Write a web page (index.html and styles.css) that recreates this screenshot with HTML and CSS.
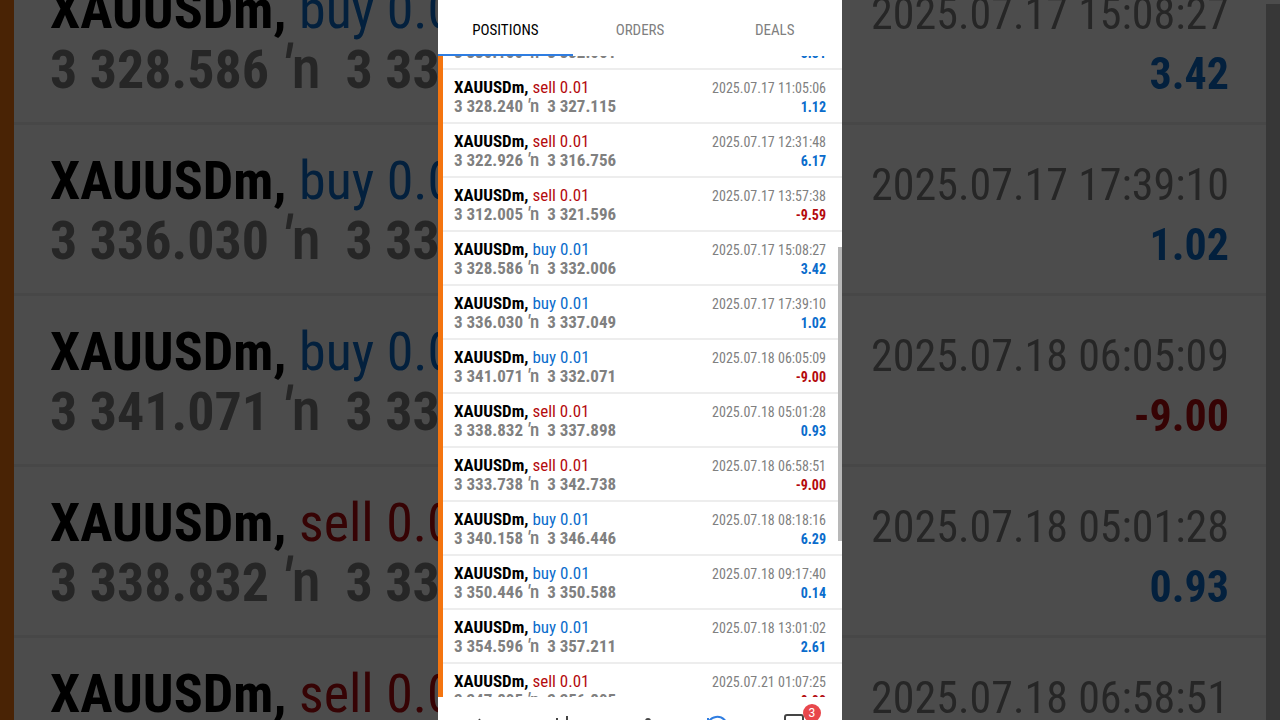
FILE: index.html
```html
<!DOCTYPE html>
<html lang="en">
<head>
  <meta charset="UTF-8" />
  <meta name="viewport" content="width=device-width, initial-scale=1.0" />
  <title>History - Positions</title>
  <link rel="stylesheet" href="styles.css">
</head>
<body>
  <div class="stage">
    <!-- Enlarged, dimmed copy behind the phone -->
    <div class="backdrop" aria-hidden="true">
      <ul class="positions positions-large" id="backdropList"></ul>
      <span class="backdrop-scrollbar"></span>
    </div>

    <main class="phone">
      <div class="tabs" role="tablist">
        <button class="tab active" role="tab" aria-selected="true">POSITIONS</button>
        <button class="tab" role="tab" aria-selected="false">ORDERS</button>
        <button class="tab" role="tab" aria-selected="false">DEALS</button>
      </div>

      <div class="history">
        <ul class="positions" id="positionList"></ul>
        <span class="scrollbar"></span>
      </div>

      <nav class="bottom-nav">
        <a href="#quotes" aria-label="Quotes">
          <svg width="28" height="28" viewBox="0 0 28 28"><path d="M2 18l9.500-9 6 7M22 17l-9.500 9-6-7" /></svg>
        </a>
        <a href="#chart" aria-label="Chart">
          <svg width="28" height="28" viewBox="0 0 28 28"><path d="M10 7v19M6 12h8v9H6zM20 5v17M17 10h6v8h-6z" /></svg>
        </a>
        <a href="#trade" aria-label="Trade">
          <svg width="28" height="28" viewBox="0 0 28 28"><path d="M1 23l6-7 6 5 9-11" /><circle class="dot" cx="22" cy="10" r="3" /></svg>
        </a>
        <a href="#history" class="current" aria-label="History">
          <svg width="28" height="28" viewBox="0 0 28 28"><path d="M3.500 11a10 10 0 1 1-1 7M3 7v4h6M12 10v6l4 3" /></svg>
        </a>
        <a href="#messages" aria-label="Messages">
          <svg width="28" height="28" viewBox="0 0 28 28"><path d="M3 4h14q2 0 2 2v13q0 2-2 2H7l-6 5V6q0-2 2-2z" /></svg>
          <span class="badge">3</span>
        </a>
      </nav>
    </main>
  </div>

  <script>
    const positions = [
      { type: "buy", open: "3 330.150", close: "3 332.061", time: "2025.07.17 09:42:11", profit: "3.31" },
      { type: "sell", open: "3 328.240", close: "3 327.115", time: "2025.07.17 11:05:06", profit: "1.12" },
      { type: "sell", open: "3 322.926", close: "3 316.756", time: "2025.07.17 12:31:48", profit: "6.17" },
      { type: "sell", open: "3 312.005", close: "3 321.596", time: "2025.07.17 13:57:38", profit: "-9.59" },
      { type: "buy", open: "3 328.586", close: "3 332.006", time: "2025.07.17 15:08:27", profit: "3.42" },
      { type: "buy", open: "3 336.030", close: "3 337.049", time: "2025.07.17 17:39:10", profit: "1.02" },
      { type: "buy", open: "3 341.071", close: "3 332.071", time: "2025.07.18 06:05:09", profit: "-9.00" },
      { type: "sell", open: "3 338.832", close: "3 337.898", time: "2025.07.18 05:01:28", profit: "0.93" },
      { type: "sell", open: "3 333.738", close: "3 342.738", time: "2025.07.18 06:58:51", profit: "-9.00" },
      { type: "buy", open: "3 340.158", close: "3 346.446", time: "2025.07.18 08:18:16", profit: "6.29" },
      { type: "buy", open: "3 350.446", close: "3 350.588", time: "2025.07.18 09:17:40", profit: "0.14" },
      { type: "buy", open: "3 354.596", close: "3 357.211", time: "2025.07.18 13:01:02", profit: "2.61" },
      { type: "sell", open: "3 347.805", close: "3 356.805", time: "2025.07.21 01:07:25", profit: "-9.00" }
    ];

    function renderPositions(list, items) {
      list.innerHTML = items.map(item => `
        <li class="position">
          <div class="deal">
            <div class="symbol">XAUUSDm, <span class="${item.type}">${item.type} 0.01</span></div>
            <div class="prices">${item.open} <span class="arrow"><i>′</i>n</span>&nbsp; ${item.close}</div>
          </div>
          <div class="result">
            <div class="time">${item.time}</div>
            <div class="profit ${item.profit.startsWith('-') ? 'sell' : 'buy'}">${item.profit}</div>
          </div>
        </li>
      `).join('');
    }

    renderPositions(document.getElementById('positionList'), positions);
    renderPositions(document.getElementById('backdropList'), positions.slice(4, 9));
  </script>
</body>
</html>
```

FILE: styles.css
```css
:root {
  --text: #000;
  --muted: #808080;
  --buy: #0a6ccc;
  --sell: #b40a0e;
  --accent: #2f7de1;
  --marker: #f47510;
  --line: #ededed;
}

* {
  box-sizing: border-box;
}

body {
  margin: 0;
  font-family: "Roboto Condensed", "Liberation Sans Narrow", Roboto, sans-serif;
  color: var(--text);
}

ul {
  margin: 0;
  padding: 0;
  list-style: none;
}

.stage {
  display: grid;
  grid-template: 100vh / 100%;
  justify-items: center;
  overflow: hidden;
}

.backdrop,
.phone {
  grid-area: 1 / 1;
}

.backdrop {
  position: relative;
  width: 100%;
  overflow: hidden;
  background: #fff;
  border-left: 14px solid var(--marker);
  filter: brightness(0.3);
}

.backdrop-scrollbar {
  position: absolute;
  top: 4px;
  right: 0;
  bottom: 0;
  width: 14px;
  background: #b8b8b8;
}

.phone {
  z-index: 1;
  display: flex;
  flex-direction: column;
  width: 100%;
  max-width: 404px;
  min-height: 0;
  overflow: hidden;
  background: #fff;
}

/* Tabs */
.tabs {
  display: flex;
  flex: none;
}

.tab {
  flex: 1;
  padding: 20px 0 14px;
  border: 0;
  border-bottom: 2px solid transparent;
  background: none;
  color: var(--muted);
  font: 400 15px/20px "Roboto Condensed", "Liberation Sans Narrow", Roboto, sans-serif;
  cursor: pointer;
}

.tab.active {
  color: var(--text);
  border-bottom-color: var(--accent);
}

/* Position list, scrolled a little into the first row */
.history {
  position: relative;
  flex: 1;
  min-height: 0;
  overflow: hidden;
  border-left: 5px solid var(--marker);
}

.positions {
  margin-top: -40px;
}

.position {
  display: flex;
  justify-content: space-between;
  height: 54px;
  padding: 8px 16px 0 11px;
  border-bottom: 2px solid var(--line);
  white-space: nowrap;
}

.symbol {
  font-size: 17px;
  line-height: 19px;
  font-weight: 700;
}

.symbol span {
  font-weight: 400;
}

.prices {
  font-size: 17px;
  line-height: 19px;
  font-weight: 700;
  color: var(--muted);
}

/* zero line height so the larger glyphs don't push the row down */
.arrow {
  font-size: 19px;
  line-height: 0;
  font-weight: 500;
}

.result {
  text-align: right;
}

.time {
  font-size: 14px;
  line-height: 20px;
  color: var(--muted);
}

.profit {
  font-size: 14px;
  line-height: 19px;
  font-weight: 700;
}

.buy {
  color: var(--buy);
}

.sell {
  color: var(--sell);
}

.scrollbar {
  position: absolute;
  top: 191px;
  right: 0;
  width: 4px;
  height: 294px;
  background: #b8b8b8;
}

/* Enlarged list */
.positions-large {
  margin-top: -46px;
}

.positions-large .position {
  height: 171px;
  padding: 26px 51px 0 36px;
  border-bottom-width: 3px;
}

.positions-large .symbol,
.positions-large .prices {
  font-size: 54px;
  line-height: 60px;
}

.positions-large .arrow {
  font-size: 60px;
  line-height: 0;
}

.positions-large .result {
  padding-top: 4px;
}

.positions-large .time,
.positions-large .profit {
  font-size: 44px;
  line-height: 60px;
}

/* Bottom navigation */
.bottom-nav {
  display: flex;
  flex: none;
  height: 23px;
  padding: 14px 4px 0;
}

.bottom-nav a {
  position: relative;
  display: flex;
  flex: 1;
  justify-content: center;
  color: #454545;
}

.bottom-nav a.current {
  color: var(--accent);
}

.bottom-nav svg {
  flex: none;
  fill: none;
  stroke: currentColor;
  stroke-width: 2;
}

.bottom-nav .dot {
  fill: currentColor;
  stroke: none;
}

.badge {
  position: absolute;
  top: -7px;
  left: 44px;
  width: 18px;
  height: 18px;
  border-radius: 50%;
  background: #e8474c;
  color: #fff;
  font: 400 12px/18px Roboto, sans-serif;
  text-align: center;
}
```
